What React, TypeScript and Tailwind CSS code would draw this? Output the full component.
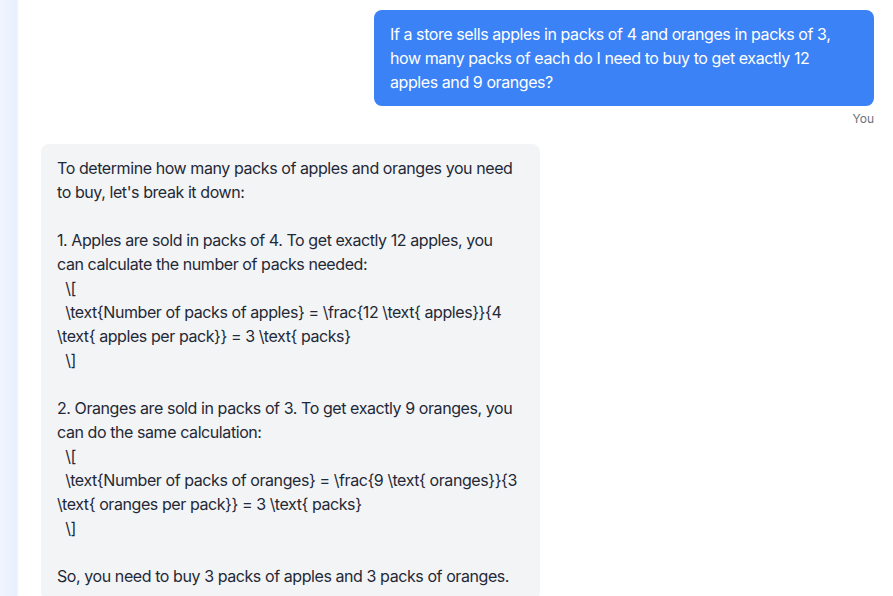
import React from "react";

const question = `If a store sells apples in packs of 4 and oranges in packs of 3,
how many packs of each do I need to buy to get exactly 12
apples and 9 oranges?`;

const answer = `To determine how many packs of apples and oranges you need
to buy, let's break it down:

1. Apples are sold in packs of 4. To get exactly 12 apples, you
can calculate the number of packs needed:
  \\[
  \\text{Number of packs of apples} = \\frac{12 \\text{ apples}}{4
\\text{ apples per pack}} = 3 \\text{ packs}
  \\]

2. Oranges are sold in packs of 3. To get exactly 9 oranges, you
can do the same calculation:
  \\[
  \\text{Number of packs of oranges} = \\frac{9 \\text{ oranges}}{3
\\text{ oranges per pack}} = 3 \\text{ packs}
  \\]

So, you need to buy 3 packs of apples and 3 packs of oranges.`;

export default function App() {
  return (
    <div
      className="flex h-[596px] w-[893px] overflow-hidden bg-white"
      style={{ fontFamily: "Inter, 'Liberation Sans', sans-serif" }}
    >
      {/* sidebar edge */}
      <div className="w-[17px] shrink-0 bg-gradient-to-r from-[#f0f5fe] to-[#e8effd] shadow-[1px_0_2px_rgba(0,0,0,0.06)]" />

      <div className="flex flex-1 flex-col pl-6 pr-[19px] pt-[10px]">
        {/* user message */}
        <div className="flex flex-col items-end">
          <div className="w-[500px] whitespace-pre rounded-lg bg-[#3b82f6] px-4 py-3 text-base leading-6 tracking-[-0.42px] text-white">
            {question}
          </div>
          <span className="mt-[5px] text-xs text-[#6b7280]">You</span>
        </div>

        {/* assistant message */}
        <div className="mt-[17px] flex">
          <div className="w-[499px] whitespace-pre rounded-lg bg-[#f3f4f6] px-4 py-3 text-base leading-6 tracking-[-0.42px] text-[#1f2937]">
            {answer}
          </div>
        </div>
      </div>
    </div>
  );
}
